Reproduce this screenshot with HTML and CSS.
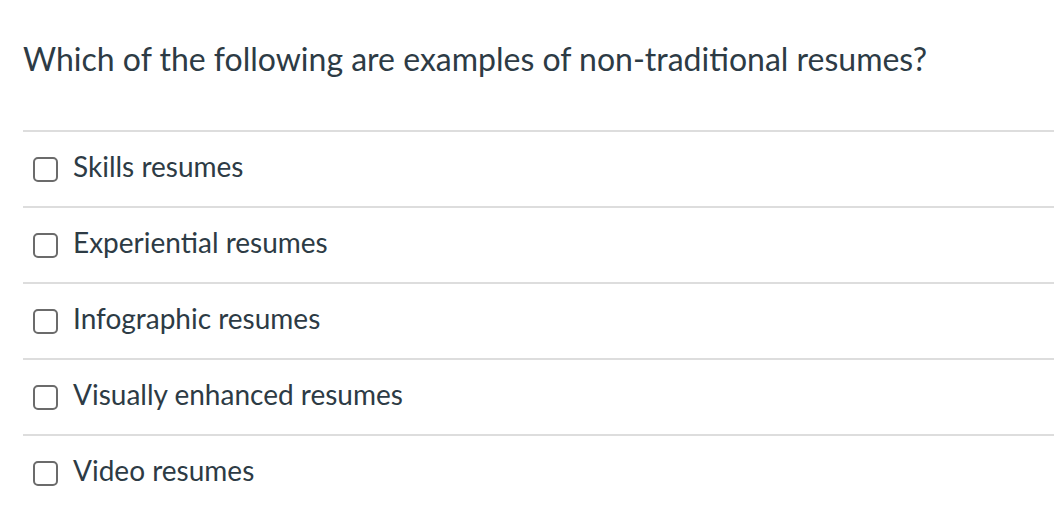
FILE: index.html
```html
<!DOCTYPE html>
<html>
<head>
<meta charset="utf-8">
<link rel="stylesheet" href="styles.css">
</head>
<body>
<div class="quiz">
  <h1 class="question">Which of the following are examples of non-traditional resumes?</h1>
  <ul class="answers">
    <li class="answer"><span class="box"></span><span class="label">Skills resumes</span></li>
    <li class="answer"><span class="box"></span><span class="label">Experiential resumes</span></li>
    <li class="answer"><span class="box"></span><span class="label">Infographic resumes</span></li>
    <li class="answer"><span class="box"></span><span class="label">Visually enhanced resumes</span></li>
    <li class="answer"><span class="box"></span><span class="label">Video resumes</span></li>
  </ul>
</div>
</body>
</html>
```
FILE: styles.css
```css
html, body {
  margin: 0;
  padding: 0;
  background: #fff;
}
.quiz {
  padding-left: 23px;
  font-family: Lato, "Noto Sans", sans-serif;
  color: #2d3b45;
}
.question {
  margin: 0;
  padding-top: 40px;
  font-size: 32px;
  font-weight: 400;
  line-height: 38px;
  height: 90px;
}
.answers {
  list-style: none;
  margin: 0;
  padding: 0;
}
.answer {
  display: flex;
  align-items: center;
  gap: 15px;
  height: 74px;
  border-top: 2px solid #dddddd;
  padding-left: 10px;
}
.box {
  width: 21px;
  height: 21px;
  border: 2px solid #6b6b6b;
  border-radius: 5px;
  flex: none;
}
.label {
  font-size: 28px;
  line-height: 34px;
  margin-bottom: 6px;
}
```
